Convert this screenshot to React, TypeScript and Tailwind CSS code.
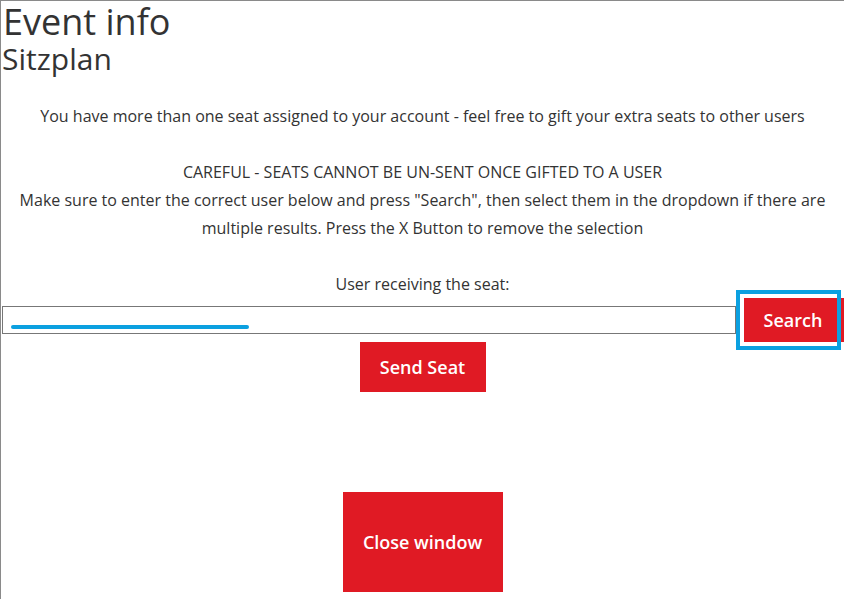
export default function App() {
  return (
    <div
      className="w-[844px] h-[599px] overflow-hidden border-l border-t border-[#8a8a8a] bg-white text-[#333]"
      style={{ fontFamily: '"Open Sans", sans-serif' }}
    >
      <h1 className="text-[36px] leading-[42px] pl-[2px]">Event info</h1>
      <h2 className="text-[30px] leading-[34px] pl-[1px] -mt-[1px]">Sitzplan</h2>

      <div className="text-center text-[16px] leading-[28px] mt-[26px]">
        <p>You have more than one seat assigned to your account - feel free to gift your extra seats to other users</p>
        <p className="mt-[28px]">CAREFUL - SEATS CANNOT BE UN-SENT ONCE GIFTED TO A USER</p>
        <p className="px-[10px]">
          Make sure to enter the correct user below and press "Search", then select them in the dropdown if there are
          multiple results. Press the X Button to remove the selection
        </p>
        <p className="mt-[28px]">User receiving the seat:</p>
      </div>

      <div className="flex items-center">
        <div className="relative flex-1 h-[28px] border border-[#777] ml-[1px]">
          <div className="absolute left-[8px] top-[18px] w-[238px] h-[4px] rounded-full bg-[#0ba0e0]" />
        </div>
        <div className="relative ml-[8px] shrink-0">
          <button className="block w-[100px] h-[44px] bg-[#e01a24] text-white font-semibold text-[18px] pr-[2px]">
            Search
          </button>
          <div className="absolute -left-[8px] -top-[8px] w-[105px] h-[60px] border-[4px] border-[#0ba0e0]" />
        </div>
      </div>

      <div className="flex justify-center">
        <button className="w-[126px] h-[50px] bg-[#e01a24] text-white font-semibold text-[18px]">Send Seat</button>
      </div>

      <div className="flex justify-center mt-[100px]">
        <button className="w-[160px] h-[100px] bg-[#e01a24] text-white font-semibold text-[18px]">Close window</button>
      </div>
    </div>
  );
}
